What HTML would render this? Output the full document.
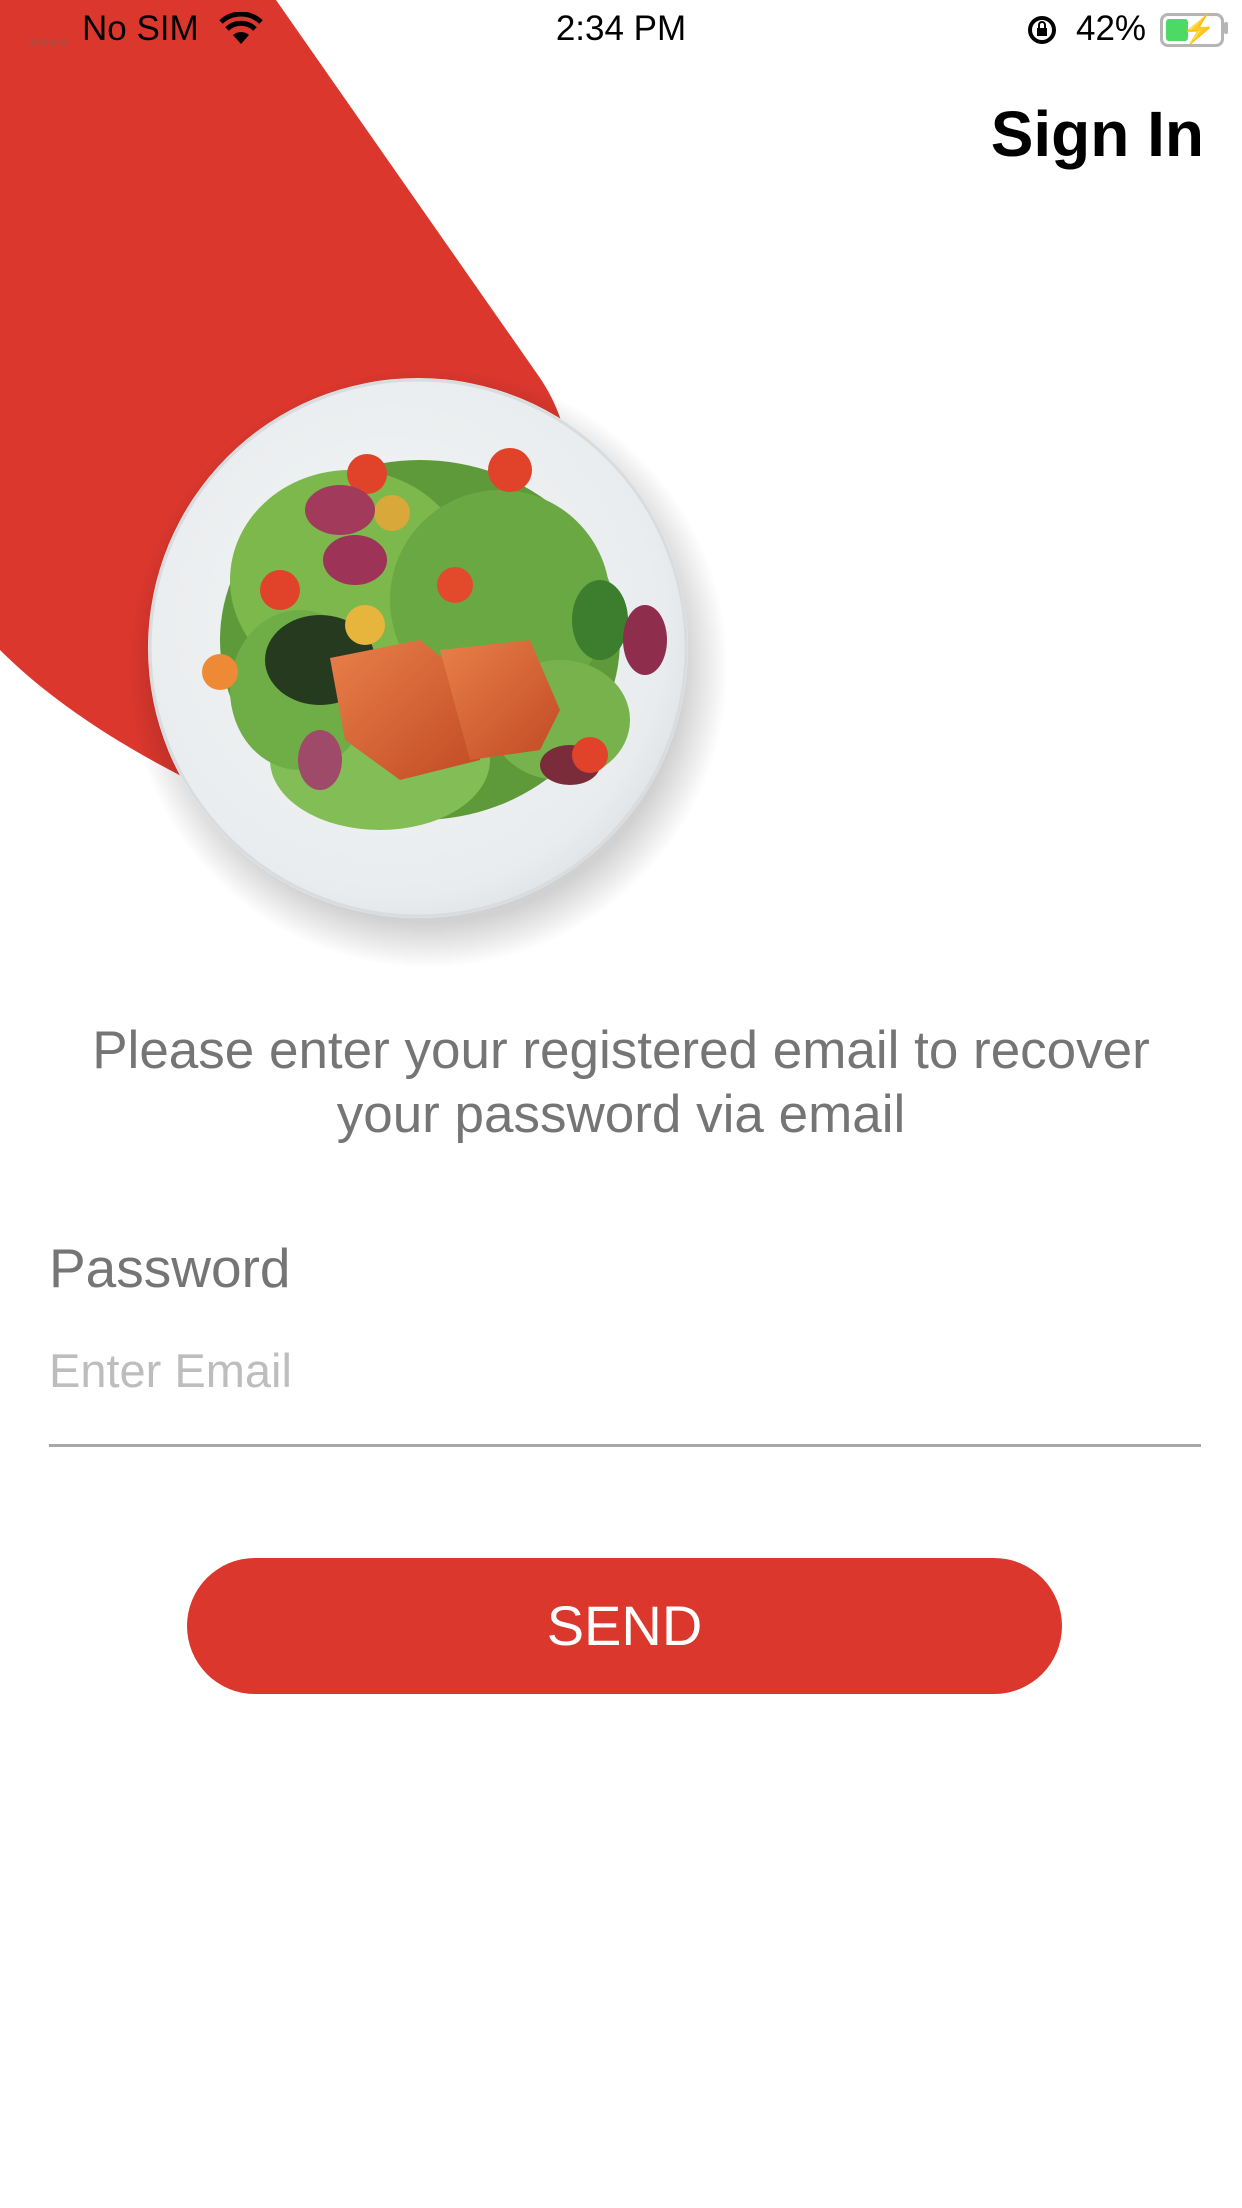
<!DOCTYPE html>
<html><head><meta charset="utf-8"><style>
html,body{margin:0;padding:0;background:#fff;}
body{width:1242px;height:2208px;position:relative;overflow:hidden;font-family:"Liberation Sans",sans-serif;}
.abs{position:absolute;}
</style></head><body>
<svg class="abs" style="left:0;top:0" width="1242" height="1000" viewBox="0 0 1242 1000">
<defs>
<radialGradient id="sh" cx="0.5" cy="0.5" r="0.5"><stop offset="0.85" stop-color="#000" stop-opacity="0.18"/><stop offset="1" stop-color="#000" stop-opacity="0"/></radialGradient>
<radialGradient id="pl" cx="0.45" cy="0.45" r="0.6"><stop offset="0" stop-color="#f4f6f7"/><stop offset="0.85" stop-color="#e9ecee"/><stop offset="1" stop-color="#dde1e4"/></radialGradient>
<linearGradient id="sal" x1="0" y1="0" x2="1" y2="1"><stop offset="0" stop-color="#e8804a"/><stop offset="1" stop-color="#c24a24"/></linearGradient>
</defs>
<path d="M0 0 H276 L540 378 C585 445 575 520 520 580 L300 830 C200 790 80 730 0 650 Z" fill="#db372d"/>
<circle cx="428" cy="668" r="300" fill="url(#sh)"/>
<circle cx="418" cy="648" r="270" fill="url(#pl)"/>
<circle cx="418" cy="648" r="268" fill="none" stroke="#d8dcdf" stroke-width="3"/>
<g>
<ellipse cx="420" cy="640" rx="200" ry="180" fill="#5f9a3a"/>
<ellipse cx="350" cy="580" rx="120" ry="110" fill="#7db84c"/>
<ellipse cx="500" cy="600" rx="110" ry="110" fill="#6aa843"/>
<ellipse cx="380" cy="760" rx="110" ry="70" fill="#82bd55"/>
<ellipse cx="300" cy="690" rx="70" ry="80" fill="#6fad47"/>
<ellipse cx="560" cy="720" rx="70" ry="60" fill="#77b24d"/>
<ellipse cx="320" cy="660" rx="55" ry="45" fill="#253a1e"/>
<ellipse cx="600" cy="620" rx="28" ry="40" fill="#3c7d2e"/>
<circle cx="367" cy="474" r="20" fill="#e0432a"/>
<circle cx="510" cy="470" r="22" fill="#e0432a"/>
<circle cx="280" cy="590" r="20" fill="#e0432a"/>
<circle cx="455" cy="585" r="18" fill="#e34a2b"/>
<circle cx="392" cy="513" r="18" fill="#d9a83a"/>
<circle cx="365" cy="625" r="20" fill="#e8b53c"/>
<circle cx="220" cy="672" r="18" fill="#ee8a35"/>
<ellipse cx="340" cy="510" rx="35" ry="25" fill="#a23a5c"/>
<ellipse cx="355" cy="560" rx="32" ry="25" fill="#9d3357"/>
<ellipse cx="645" cy="640" rx="22" ry="35" fill="#8e2e4c"/>
<ellipse cx="320" cy="760" rx="22" ry="30" fill="#a04a6a"/>
<ellipse cx="570" cy="765" rx="30" ry="20" fill="#7a2c3a"/>
<circle cx="590" cy="755" r="18" fill="#e0432a"/>
<path d="M330 658 L420 640 L470 680 L480 760 L400 780 L345 740 Z" fill="url(#sal)"/>
<path d="M440 650 L530 640 L560 710 L540 750 L470 760 Z" fill="url(#sal)"/>
</g>
</svg>
<div class="abs" style="left:30px;top:33px;width:40px;height:10px;">
<span style="display:inline-block;width:7px;height:7px;border-radius:4px;background:#b8463c;margin-right:3px"></span><span style="display:inline-block;width:7px;height:7px;border-radius:4px;background:#b8463c;margin-right:3px"></span><span style="display:inline-block;width:7px;height:7px;border-radius:4px;background:#b8463c;margin-right:3px"></span><span style="display:inline-block;width:7px;height:7px;border-radius:4px;background:#b8463c"></span></div>
<div class="abs" style="left:82px;top:9px;font-size:35px;color:#000;">No SIM</div>
<svg class="abs" style="left:219px;top:12px" width="44" height="34" viewBox="0 0 44 34"><path d="M22 32 L30 23 A12 12 0 0 0 14 23 Z M22 32" fill="#000"/><path d="M8 17 A20 20 0 0 1 36 17" stroke="#000" stroke-width="5" fill="none"/><path d="M2 10 A29 29 0 0 1 42 10" stroke="#000" stroke-width="5" fill="none"/></svg>
<div class="abs" style="left:0;width:1242px;top:9px;text-align:center;font-size:35px;color:#000;">2:34 PM</div>
<svg class="abs" style="left:1026px;top:14px" width="32" height="32" viewBox="0 0 32 32"><circle cx="16" cy="16" r="12" fill="none" stroke="#000" stroke-width="4"/><rect x="11" y="14" width="10" height="8" fill="#000"/><path d="M13 14 V11 A3 3 0 0 1 19 11 V14" stroke="#000" stroke-width="2" fill="none"/></svg>
<div class="abs" style="left:1076px;top:9px;font-size:35px;color:#000;">42%</div>
<div class="abs" style="left:1160px;top:13px;width:58px;height:28px;border:3px solid #b5b5b5;border-radius:8px;"><div style="position:absolute;left:3px;top:3px;width:22px;height:22px;background:#4cd964;border-radius:3px"></div><div style="position:absolute;left:18px;top:-3px;font-size:28px;color:#000;">⚡</div></div>
<div class="abs" style="left:1224px;top:22px;width:4px;height:12px;background:#b5b5b5;border-radius:2px"></div>
<div class="abs" style="right:38px;top:102px;font-size:64px;font-weight:bold;color:#000;line-height:1;">Sign In</div>
<div class="abs" style="left:0;width:1242px;top:1019px;text-align:center;font-size:53px;color:#757575;line-height:64px;">Please enter your registered email to recover<br>your password via email</div>
<div class="abs" style="left:49px;top:1236px;font-size:55px;color:#757575;">Password</div>
<div class="abs" style="left:49px;top:1343px;font-size:47px;color:#bdbdbd;">Enter Email</div>
<div class="abs" style="left:49px;top:1444px;width:1152px;height:3px;background:#a8a8a8;"></div>
<div class="abs" style="left:187px;top:1558px;width:875px;height:136px;border-radius:68px;background:#db372d;color:#fff;font-size:56px;text-align:center;line-height:136px;">SEND</div>
</body></html>
